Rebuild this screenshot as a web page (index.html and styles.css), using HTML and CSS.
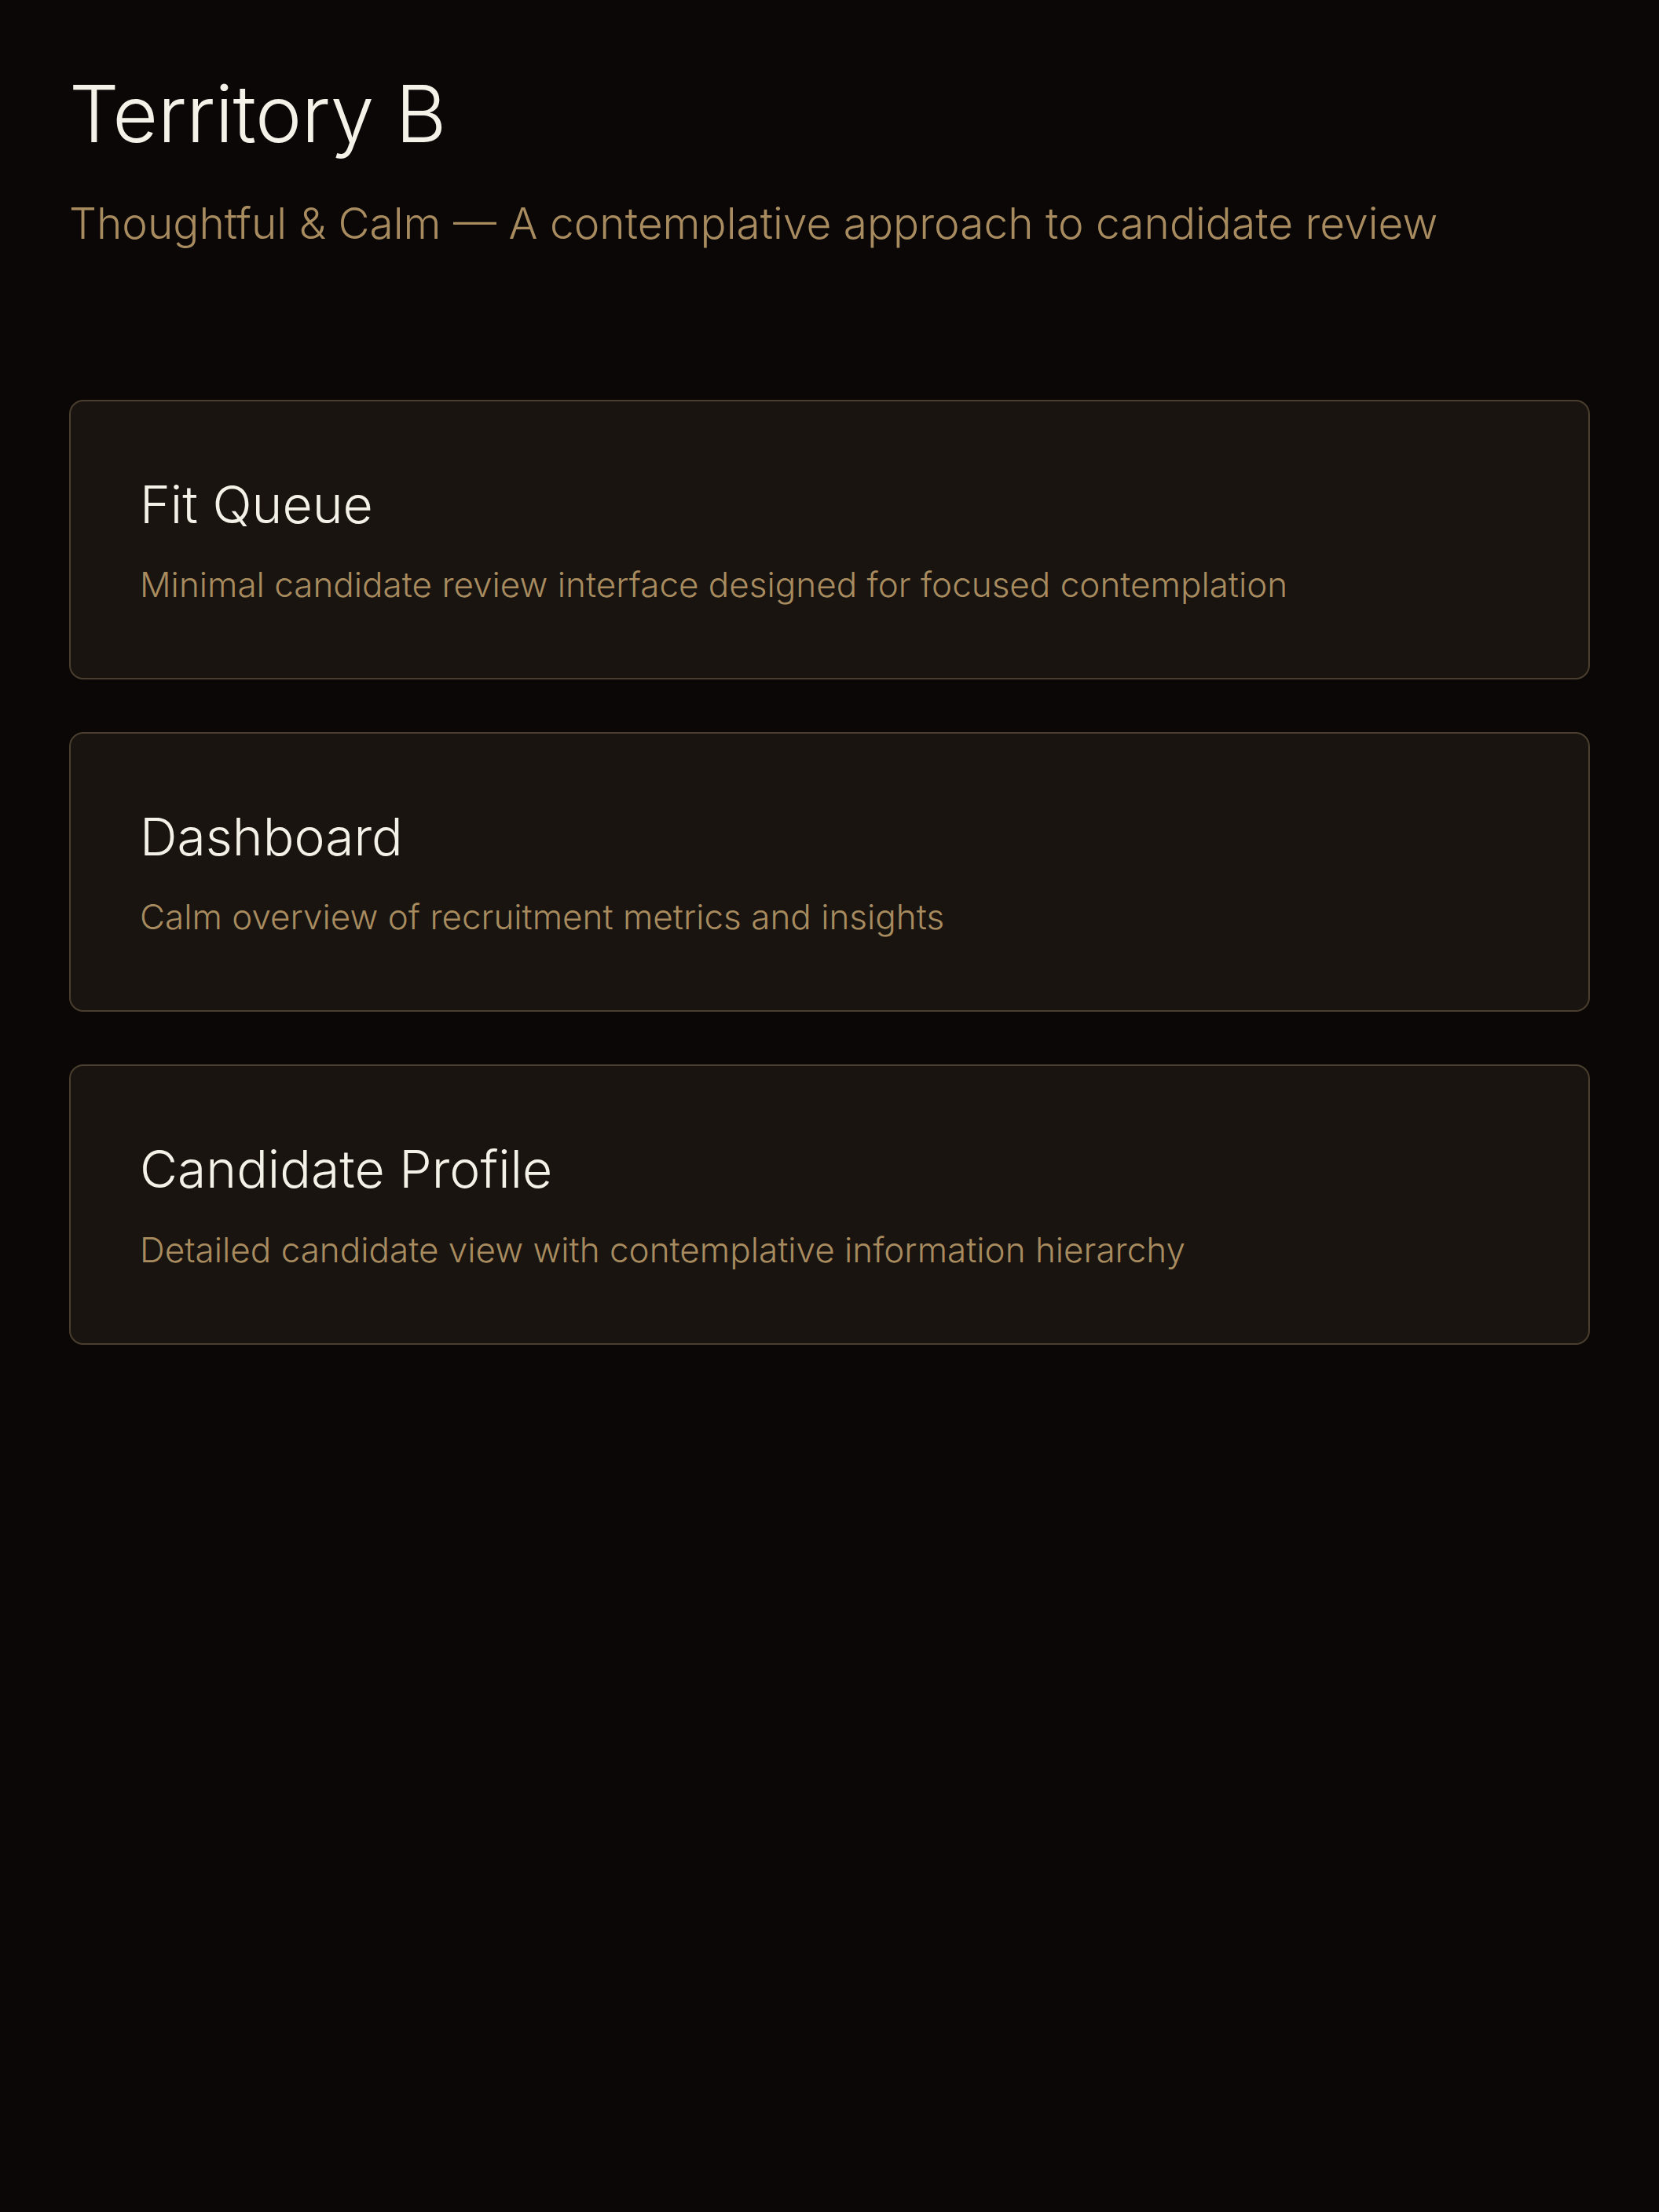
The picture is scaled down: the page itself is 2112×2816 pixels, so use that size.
FILE: index.html
```html
<!DOCTYPE html>
<html lang="en">
<head>
<meta charset="utf-8">
<title>Territory B</title>
<link rel="stylesheet" href="styles.css">
</head>
<body>
<main class="page">
  <header class="intro">
    <h1 class="title">Territory B</h1>
    <p class="subtitle">Thoughtful &amp; Calm — A contemplative approach to candidate review</p>
  </header>
  <section class="cards">
    <a class="card" href="#">
      <h2 class="card-title">Fit Queue</h2>
      <p class="card-desc">Minimal candidate review interface designed for focused contemplation</p>
    </a>
    <a class="card" href="#">
      <h2 class="card-title">Dashboard</h2>
      <p class="card-desc">Calm overview of recruitment metrics and insights</p>
    </a>
    <a class="card" href="#">
      <h2 class="card-title">Candidate Profile</h2>
      <p class="card-desc">Detailed candidate view with contemplative information hierarchy</p>
    </a>
  </section>
</main>
</body>
</html>
```

FILE: styles.css
```css
html, body {
  margin: 0;
  padding: 0;
  background: #0a0706;
  min-height: 100%;
}
body {
  font-family: Inter, "Noto Sans", sans-serif;
  font-weight: 300;
  color: #f4f1e8;
}
.page {
  padding: 85px 88px 88px;
}
.intro {
  margin-bottom: 192px;
}
.title {
  margin: 0;
  font-size: 100px;
  font-weight: 300;
  line-height: 1.2;
  letter-spacing: -0.005em;
  color: #f4f1e8;
}
.subtitle {
  margin: 46px 0 0;
  font-size: 55px;
  font-weight: 300;
  line-height: 1.2;
  color: #a88c60;
}
.cards {
  display: flex;
  flex-direction: column;
  gap: 67px;
}
.card {
  display: block;
  text-decoration: none;
  background: #19140f;
  border: 2px solid #4a3f2e;
  border-radius: 18px;
  padding: 92px 88px 86px;
}
.card-title {
  margin: 0;
  font-size: 66px;
  font-weight: 300;
  line-height: 1.2;
  color: #f4f1e8;
}
.card-desc {
  margin: 29px 0 0;
  font-size: 44px;
  font-weight: 300;
  line-height: 1.5;
  color: #a88c60;
}
```
